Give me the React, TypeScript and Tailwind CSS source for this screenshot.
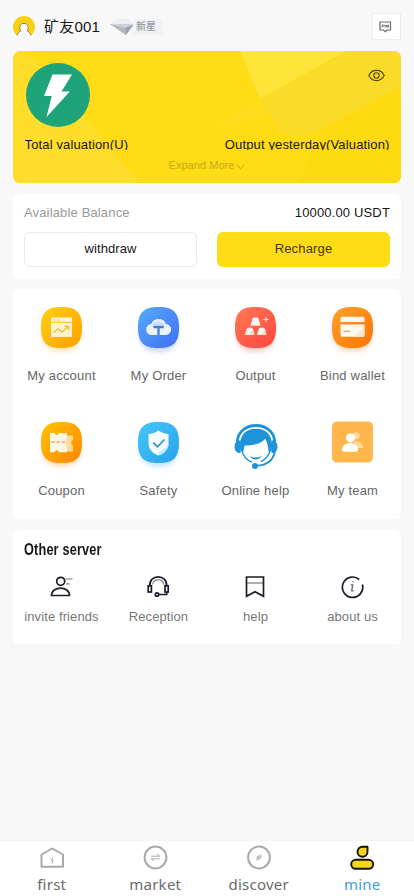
import type { ReactNode } from 'react'

type Entry = { label: string; icon: ReactNode }

// rounded gradient tile shared by most of the service icons
function Tile({
  id,
  from,
  to,
  children,
}: {
  id: string
  from: string
  to: string
  children: ReactNode
}) {
  return (
    <svg width="56" height="56" viewBox="0.5 0.5 56 56" fill="none">
      <defs>
        <linearGradient id={id} x1="0" y1="0" x2="1" y2="1">
          <stop stopColor={from} />
          <stop offset="1" stopColor={to} />
        </linearGradient>
        <filter id={`${id}-s`} x="-30%" y="-30%" width="160%" height="160%">
          <feGaussianBlur stdDeviation="2.4" />
        </filter>
      </defs>
      <rect x="9" y="14" width="38" height="38" rx="15" fill={to} opacity=".28" filter={`url(#${id}-s)`} />
      <path
        d="M28 7.500C43 7.500 48.500 13 48.500 28S43 48.500 28 48.500 7.500 43 7.500 28 13 7.500 28 7.500Z"
        fill={`url(#${id})`}
      />
      {children}
    </svg>
  )
}

const SERVICES: Entry[] = [
  {
    label: 'My account',
    icon: (
      <Tile id="account" from="#FFD012" to="#FFA000">
        <path d="M17.500 19a1 1 0 0 1 1-1h19a1 1 0 0 1 1 1v3.300h-21Z" fill="#FFF6D8" />
        <path d="M17.500 23.300h21V36a1.500 1.500 0 0 1-1.500 1.500H19a1.500 1.500 0 0 1-1.500-1.500Z" fill="#FFF3CC" />
        <circle cx="21" cy="20.500" r=".9" fill="#F5C95A" />
        <circle cx="25" cy="20.500" r=".9" fill="#F5C95A" />
        <path d="m20.500 33 4-3.500 4 3 6-5.500m-3.500-.3h4v4" stroke="#E8C04E" strokeWidth="1.500" />
      </Tile>
    ),
  },
  {
    label: 'My Order',
    icon: (
      <Tile id="order" from="#55ABFA" to="#426EF3">
        <path
          d="M21.500 35.500a5.500 5.500 0 0 1-.8-11 8 8 0 0 1 14.800 0 5.500 5.500 0 0 1-.8 11Z"
          fill="#E9F2FF"
        />
        <path d="M22 25a7.500 7.500 0 0 1 12 0l-2 1h-8Z" fill="#C9DEFF" />
        <path d="M22.800 27.500h10.500M28 27v8.500" stroke="#4A7CC9" strokeWidth="2.300" />
      </Tile>
    ),
  },
  {
    label: 'Output',
    icon: (
      <Tile id="output" from="#FF7B55" to="#FF4340">
        <path d="m25 19-2 6.500q-.1.800.7.800h8.600q.8 0 .7-.8L31 19q-.2-.9-1-.9h-4q-.8 0-1 .9Z" fill="#FFF3EC" />
        <path d="m19.400 28.900-1.900 5.900q-.1.700.7.700h8q.8 0 .7-.7L25.200 29q-.2-.8-.9-.8h-4q-.7 0-.9.700Z" fill="#FFF3EC" />
        <path d="m31.400 28.900-1.900 5.900q-.1.700.7.700h8q.8 0 .7-.7L37.200 29q-.2-.8-.9-.8h-4q-.7 0-.9.700Z" fill="#FFF3EC" />
        <path d="m27 35.500-1.500-6-4 6Zm12 0-1.500-6-4 6Z" fill="#FFD9CC" />
        <path d="M38.500 17.500v5M36 20h5" stroke="#FFE3DA" strokeWidth="1.200" />
      </Tile>
    ),
  },
  {
    label: 'Bind wallet',
    icon: (
      <Tile id="wallet" from="#FFA02E" to="#FF7403">
        <path d="M16 19a1.700 1.700 0 0 1 1.700-1.700h20.600A1.700 1.700 0 0 1 40 19v3.500H16Z" fill="#FFF8EF" />
        <path d="M16 25h24v10.500a1.700 1.700 0 0 1-1.700 1.700H17.700a1.700 1.700 0 0 1-1.700-1.700Z" fill="#FFF8EF" />
        <path d="M40 27 30 37.200h8.300a1.700 1.700 0 0 0 1.700-1.700Z" fill="#FFE5CB" />
        <path d="M19 31.700h6.500" stroke="#D9A066" strokeWidth="1.200" />
      </Tile>
    ),
  },
  {
    label: 'Coupon',
    icon: (
      <Tile id="coupon" from="#FFC400" to="#FF8500">
        <path d="M30 21h9.500v4.500a3 3 0 0 0 0 5.500v6H30Z" fill="#FFDA98" />
        <path
          d="M16.500 18.500h4.700a2 2 0 0 0 4 0h8.300v4.700q-2.500 4.800 0 9.600v5h-8.300a2 2 0 0 0-4 0h-4.700Z"
          fill="#FFF6E4"
        />
        <path d="M18 27.500h14" stroke="#E8B06A" strokeWidth="1.500" strokeDasharray="3.500 1.500" />
      </Tile>
    ),
  },
  {
    label: 'Safety',
    icon: (
      <Tile id="safety" from="#45C6F8" to="#2AA3EC">
        <path
          d="M28 16c3.300 2.500 6.500 3.300 10 3.600v9.400c0 6-4.800 10-10 12-5.200-2-10-6-10-12v-9.400c3.500-.3 6.700-1.100 10-3.600Z"
          fill="#F5FCFF"
        />
        <path d="M38 29c0 6-4.800 10-10 12v-3.500c4.500-1.600 8-5 10-8.500Z" fill="#C3E9FC" />
        <path d="m22.700 28 4.300 4.300 7-7.300" stroke="#3F92C0" strokeWidth="1.800" />
      </Tile>
    ),
  },
  {
    label: 'Online help',
    icon: (
      <svg width="56" height="56" viewBox="0 0 56 56" fill="none">
        <path d="M9.300 27C10 5 46 5 46.700 27" stroke="#1E93D8" strokeWidth="2.800" />
        <path
          d="M12.500 36.500C10 21 17 13.800 28 13.800S46 21 43.500 36.500h-3c-.2-5.200-1.300-9.500-3.300-12.800-3.700 4.800-10.500 6.500-20.700 6.800-.5 2.700-.7 4.500-1 6Z"
          fill="#1E93D8"
        />
        <path
          d="M12.500 25.500V38C9 38 6.500 36 6.500 31.700s2.500-6.400 6-6.200Zm31 0V38c3.500 0 6-2 6-6.300s-2.500-6.400-6-6.200Z"
          fill="#1E93D8"
        />
        <path d="M14 36c1.300 5.200 5 9.300 10 11.200M42 36c-1.500 5-4.800 8.500-9 10.700" stroke="#1E93D8" strokeWidth="1.300" />
        <path d="M47 36.500c-2 8.500-8.500 13.800-18 14.200" stroke="#1E93D8" strokeWidth="1.800" />
        <path d="M21.500 41q6.300 3.200 12.500 0c-3 4.500-9.500 4.500-12.500 0Z" fill="#1E93D8" />
        <circle cx="27" cy="51" r="3" fill="#1E93D8" />
      </svg>
    ),
  },
  {
    label: 'My team',
    icon: (
      <svg width="56" height="56" viewBox="0.500 0.500 56 56" fill="none">
        <rect x="7.500" y="7" width="41" height="41" rx="5" fill="#FFB64C" />
        <circle cx="31.800" cy="21.300" r="3.500" fill="#FFD99D" />
        <path d="M29 27c6-1 9.500 2.200 9.500 6.500H32Z" fill="#FFD99D" />
        <circle cx="26" cy="23.300" r="4.600" fill="#FFF" />
        <path d="M17.500 35.500C17.500 26 33.500 26 33.500 35.500q0 1.800-1.800 1.800H19.300q-1.800 0-1.800-1.800Z" fill="#FFF" />
      </svg>
    ),
  },
]

const OTHERS: Entry[] = [
  {
    label: 'invite friends',
    icon: (
      <>
        <circle cx="11.500" cy="6.300" r="4" />
        <path d="M2.300 20.500c0-9.800 18-9.800 18 0Z" strokeLinejoin="round" />
        <path d="M16.300 4h7M17 8.800h3.300" strokeWidth="1.200" opacity=".6" />
      </>
    ),
  },
  {
    label: 'Reception',
    icon: (
      <>
        <path d="M3.600 11C2.600-1.300 21.400-1.300 20.400 11" />
        <path d="M6.500 9.500c.5-6.300 10.500-6.300 11 0" strokeWidth="1.200" opacity=".55" />
        <rect x="2" y="10.800" width="3.200" height="6.200" />
        <rect x="18.800" y="10.800" width="3.200" height="6.200" />
        <path d="M20.500 17v2.500H12.700" />
        <circle cx="10.800" cy="19.500" r="1.700" />
      </>
    ),
  },
  {
    label: 'help',
    icon: (
      <>
        <path d="M3.300 2h17v19.300L11.800 16.800l-8.500 4.500Z" />
        <path d="M4 8h16" strokeWidth="1.200" opacity=".6" />
      </>
    ),
  },
  {
    label: 'about us',
    icon: (
      <>
        <path d="M19 4.500A10.200 10.200 0 1 0 22.200 9.500" />
        <path d="M10.500 9.800h2l-1 6h2M12.800 6.300v1.300" strokeWidth="1.300" opacity=".65" />
      </>
    ),
  },
]

const TABS: Entry[] = [
  {
    label: 'first',
    icon: (
      <>
        <path d="M3.500 9.500 14.200 3.500 25 9.500v12.300H3.500Z" strokeWidth="2" strokeLinejoin="round" />
        <path d="m14.500 12.500-1 3h1.500l-1 3" strokeWidth="1" />
      </>
    ),
  },
  {
    label: 'market',
    icon: (
      <>
        <circle cx="14.500" cy="12.500" r="10.900" strokeWidth="2" />
        <path d="M10.200 11.200h8.500l-2.500-2M18.700 13.800h-8.500l2.500 2" strokeWidth="1" />
      </>
    ),
  },
  {
    label: 'discover',
    icon: (
      <>
        <circle cx="14" cy="12.500" r="10.900" strokeWidth="2" />
        <path d="m11 16 1-4.700 5-2.300-1.300 4.500Z" fill="#B0B0B0" stroke="none" />
        <path d="m11 15.500 6-6.500" stroke="#FFF" strokeWidth=".6" />
      </>
    ),
  },
  {
    label: 'mine',
    icon: (
      <g stroke="#17130A" fill="#F4D51C" strokeWidth="1.900">
        <path d="M19.500 1.800v5a5 5 0 1 1-5-5Z" strokeLinejoin="round" />
        <rect x="3.200" y="14.800" width="22" height="9" rx="4.500" />
      </g>
    ),
  },
]

export default function App() {
  return (
    <main className="flex h-[896px] w-full flex-col overflow-hidden bg-[#f8f8f8] font-['Liberation_Sans','Noto_Sans_CJK_SC',sans-serif] text-[13px] text-[#171717]">
      <div className="flex flex-1 flex-col px-[13px]">
        <header className="flex h-[51px] items-center pt-[2px]">
          <svg width="22" height="22" viewBox="0 0 22 22">
            <circle cx="11" cy="11" r="11" fill="#F8D112" />
            <path
              d="M3.500 20.500c.5-3 2-4.500 4.200-5.500-4.700-10.200 11.300-10.200 6.600 0 2.200 1 3.700 2.500 4.200 5.500l-2 2.500h-11Z"
              fill="#F8F8F8"
            />
            <path
              d="M4.200 19.500c.5-2.500 1.600-3.600 3.500-4.500-4.700-10.200 11.300-10.200 6.600 0 1.900.9 3 2 3.500 4.500"
              fill="none"
              stroke="#8D7925"
              strokeWidth=".9"
            />
          </svg>
          <span className="ml-[9px] text-[15px] leading-6 tracking-[0.2px]">矿友001</span>
          <div className="mt-[1px] ml-[9px] flex h-5 items-center">
            <svg width="27" height="21" viewBox="0 0 27 21">
              <path d="m1 7 7-5h11l6 5Z" fill="#EBEEF3" />
              <path d="M1 7h24L17 18Z" fill="#C2C5CE" />
              <path d="m1 7 15 4 1 7Z" fill="#B2B6BE" />
              <path d="m16 11 9-4-8 11Z" fill="#9CA1AC" />
              <path d="M1 7h24l-9 4Z" fill="#CDD1D9" />
            </svg>
            <span className="-ml-[3px] rounded-sm bg-[#f0f2f5] pr-[7px] pl-[3px] text-[10px] leading-4 font-medium text-[#94979d]">
              新星
            </span>
          </div>
          <button className="ml-auto flex h-[27px] w-[29px] items-center justify-center border border-[#eeeeee] bg-white pr-[3px]">
            <svg width="13" height="12" viewBox="0 0 13 12" fill="none" stroke="#6F6A6B">
              <path d="M1 1h10.500v8H8L6.300 10.700 4.500 9H1Z" strokeWidth="1.200" />
              <path d="M3 6.500V4h2.500M3 5.200h2M6 6.500V4l1.500 2V4m1 2.500V4h1v2.500" strokeWidth=".8" />
            </svg>
          </button>
        </header>

        <section className="relative h-[132px] overflow-hidden rounded-[7px] bg-[#ffdc16]">
          <svg className="absolute inset-0" width="388" height="132" viewBox="0 0 388 132">
            <path d="M0 0q20 5 30 17l80 95 15 20H0Z" fill="#FFE14A" opacity=".4" />
            <path d="M190 82 333 0h-106l35 62Z" fill="#FFE030" opacity=".3" />
            <path d="M227 0h106l-86 48Z" fill="#FFE544" opacity=".75" />
            <path d="M247 48 333 0h55v35l-85 47q-28 8-38-5Z" fill="#F9DA2C" opacity=".85" />
            <path d="m388 35-85 47-15 50h100Z" fill="#FDDA12" />
          </svg>
          <div className="relative flex h-full flex-col px-[11.500px] pt-[12px]">
            <div className="flex items-start justify-between">
              <svg width="65" height="65" viewBox="0 0 65 65">
                <circle cx="33" cy="32" r="32" fill="#1FA47A" />
                <path d="M27.500 11.500H47L36.500 28.500h8.300L21.500 54l5.200-21H19Z" fill="#FFF" />
              </svg>
              <svg
                className="mt-[6px] mr-[5px]"
                width="17"
                height="13"
                viewBox="0 0 17 13"
                fill="none"
                stroke="#51450D"
                strokeWidth="1.100"
              >
                <path d="M.8 6.500C4-.3 13-.3 16.200 6.500 13 13.300 4 13.300.8 6.500Z" />
                <circle cx="8.500" cy="6.500" r="2.700" />
              </svg>
            </div>
            <div className="mt-[9px] flex h-[13px] justify-between overflow-hidden leading-[15px] tracking-[0.14px]">
              <span>Total valuation(U)</span>
              <span>Output yesterday(Valuation)</span>
            </div>
            <div className="mt-[7px] flex items-center justify-center text-[11px] leading-4 tracking-[0.05px] text-[#c9a914]">
              Expand More
              <svg className="mt-[3px] ml-[2px]" width="9" height="6" viewBox="0 0 9 6" fill="none" stroke="#C4A416">
                <path d="m.7.700 3.800 4 3.800-4" />
              </svg>
            </div>
          </div>
        </section>

        <section className="mt-[11px] h-[85px] rounded-md bg-white px-[11px] pt-[11px]">
          <div className="flex justify-between leading-4">
            <span className="tracking-[0.15px] text-[#999999]">Available Balance</span>
            <span className="tracking-[0.15px]">10000.00 USDT</span>
          </div>
          <div className="mt-[11px] grid grid-cols-2 gap-5">
            <button className="h-[35px] rounded-md border border-[#eaeaea] pb-[2px] tracking-[0.1px]">withdraw</button>
            <button className="h-[35px] rounded-md bg-[#ffdc16] pb-[2px] tracking-[0.15px] text-[#3f3710]">
              Recharge
            </button>
          </div>
        </section>

        <section className="mt-[10px] grid h-[230px] grid-cols-4 content-start rounded-md bg-white pt-[11px]">
          {SERVICES.map((s) => (
            <div key={s.label} className="flex h-[114.500px] flex-col items-center">
              {s.icon}
              <span className="mt-[12px] leading-4 tracking-[0.2px] whitespace-nowrap text-[#666666]">{s.label}</span>
            </div>
          ))}
        </section>

        <section className="mt-[11px] h-[114px] rounded-md bg-white pt-[11px]">
          <h2 className="ml-[11px] w-fit origin-left scale-x-[0.795] text-[16px] leading-[18px] font-bold tracking-[0.2px]">
            Other server
          </h2>
          <div className="mt-[16px] grid grid-cols-4">
            {OTHERS.map((o) => (
              <div key={o.label} className="flex flex-col items-center">
                <svg width="24" height="24" viewBox="0.8 0 24 24" fill="none" stroke="#1B1C29" strokeWidth="1.700">
                  {o.icon}
                </svg>
                <span className="mt-[10px] leading-4 tracking-[0.1px] whitespace-nowrap text-[#777777]">{o.label}</span>
              </div>
            ))}
          </div>
        </section>
      </div>

      <nav className="grid h-[55px] shrink-0 grid-cols-4 bg-white pt-1 shadow-[0_-1px_2px_rgba(0,0,0,0.03)]">
        {TABS.map((t) => (
          <div key={t.label} className="flex flex-col items-center">
            <svg width="28" height="26" viewBox="0 0 28 26" fill="none" stroke="#AAAAAA">
              {t.icon}
            </svg>
            <span
              className={`mt-[3px] font-['Noto_Sans',sans-serif] text-[15px] leading-5 tracking-[0.25px] ${
                t.label === 'mine' ? 'text-[#3d9de6]' : 'text-[#6b6b6b]'
              }`}
            >
              {t.label}
            </span>
          </div>
        ))}
      </nav>
    </main>
  )
}
